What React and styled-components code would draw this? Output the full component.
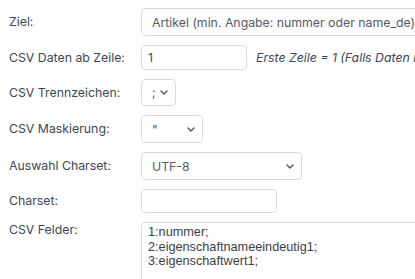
import styled, { createGlobalStyle } from 'styled-components';

const GlobalStyle = createGlobalStyle`
  html, body {
    margin: 0;
    padding: 0;
    background: #ffffff;
    overflow: hidden;
  }
  body {
    font-family: Inter, "Liberation Sans", sans-serif;
  }
`;

const Form = styled.div`
  display: flex;
  flex-direction: column;
  gap: 9px;
  padding: 8px 0 0 9px;
  width: 600px;
`;

const Row = styled.div`
  display: flex;
  align-items: ${(p) => (p.$top ? 'flex-start' : 'center')};
  height: ${(p) => p.$h}px;
`;

const Label = styled.div`
  width: 132px;
  flex-shrink: 0;
  font-size: 12.3px;
  line-height: 16px;
  color: #3b4757;
`;

const chevron = encodeURIComponent(
  '<svg xmlns="http://www.w3.org/2000/svg" width="8" height="5" viewBox="0 0 8 5"><path d="M1 1l3 3 3-3" fill="none" stroke="#5a5f66" stroke-width="1.5" stroke-linecap="round" stroke-linejoin="round"/></svg>'
);

const Select = styled.div`
  box-sizing: border-box;
  width: ${(p) => p.$w}px;
  height: 100%;
  display: flex;
  align-items: center;
  padding: 0 ${(p) => (p.$chevron ? 18 : 10)}px 0 10px;
  border: 1px solid #d9dde2;
  border-radius: 4px;
  font-size: 12.3px;
  color: #555b63;
  white-space: nowrap;
  overflow: hidden;
  background: #fff
    ${(p) =>
      p.$chevron
        ? `url("data:image/svg+xml,${chevron}") no-repeat right 7px center`
        : 'none'};
`;

const Input = styled.div`
  box-sizing: border-box;
  width: ${(p) => p.$w}px;
  height: 100%;
  display: flex;
  align-items: center;
  padding: 0 6px;
  border: 1px solid #d9dde2;
  border-radius: 4px;
  font-size: 12.3px;
  color: #444b54;
`;

const Hint = styled.span`
  margin-left: 9px;
  font-size: 12.3px;
  font-style: italic;
  color: #3b4757;
  white-space: nowrap;
`;

const TextArea = styled.div`
  box-sizing: border-box;
  width: 300px;
  height: 80px;
  padding: 2px 6px;
  border: 1px solid #d9dde2;
  border-radius: 4px;
  font-family: "Liberation Sans", Arial, sans-serif;
  font-size: 12.7px;
  line-height: 14.5px;
  color: #3a3f45;
  white-space: pre;
`;

export default function App() {
  return (
    <>
      <GlobalStyle />
      <Form>
        <Row $h={28}>
          <Label>Ziel:</Label>
          <Select $w={330}>Artikel (min. Angabe: nummer oder name_de)</Select>
        </Row>
        <Row $h={25}>
          <Label>CSV Daten ab Zeile:</Label>
          <Input $w={106}>1</Input>
          <Hint>Erste Zeile = 1 (Falls Daten in der ersten Zeile)</Hint>
        </Row>
        <Row $h={27}>
          <Label>CSV Trennzeichen:</Label>
          <Select $w={35} $chevron>;</Select>
        </Row>
        <Row $h={28}>
          <Label>CSV Maskierung:</Label>
          <Select $w={62} $chevron>"</Select>
        </Row>
        <Row $h={28}>
          <Label>Auswahl Charset:</Label>
          <Select $w={161} $chevron>UTF-8</Select>
        </Row>
        <Row $h={24}>
          <Label>Charset:</Label>
          <Input $w={136} />
        </Row>
        <Row $h={80} $top>
          <Label>CSV Felder:</Label>
          <TextArea>{'1:nummer;\n2:eigenschaftnameeindeutig1;\n3:eigenschaftwert1;'}</TextArea>
        </Row>
      </Form>
    </>
  );
}
